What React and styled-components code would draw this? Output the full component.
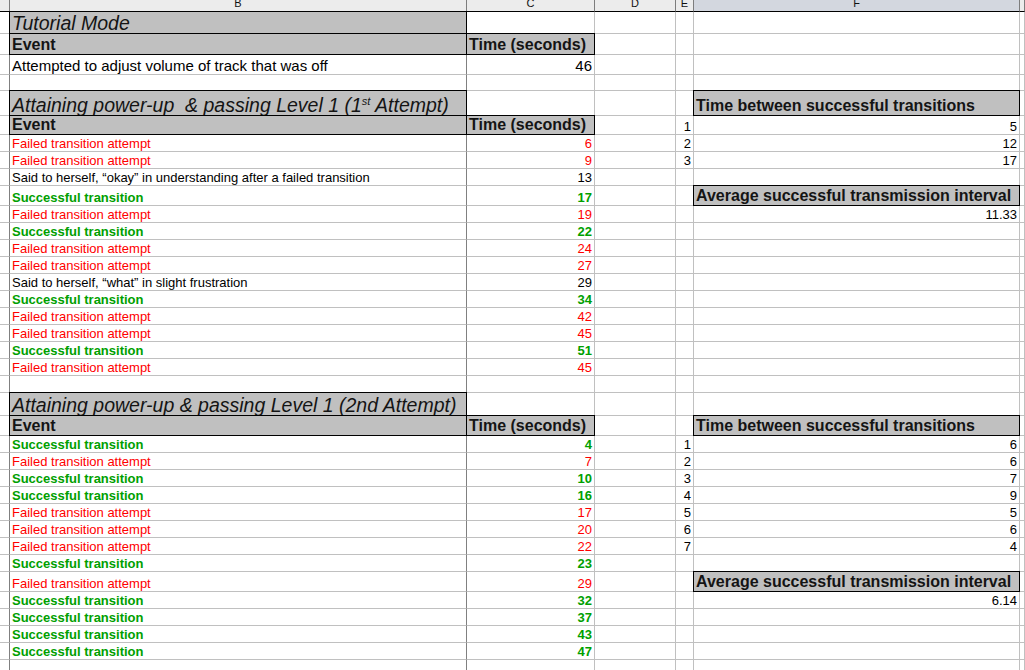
import React from 'react';
import styled, { createGlobalStyle, css } from 'styled-components';

const Global = createGlobalStyle`
  html, body { margin: 0; padding: 0; background: #fff; overflow: hidden; }
  body { font-family: "Liberation Sans", Arial, Helvetica, sans-serif; color: #000; }
  * { box-sizing: border-box; }
`;

const COLS = '10px 457px 128px 81px 18px 326px 1fr';

const Sheet = styled.div`
  width: 1025px;
  height: 670px;
  overflow: hidden;
  display: flex;
  flex-direction: column;
  background: #fff;
`;

const HeaderRow = styled.div`
  display: grid;
  grid-template-columns: ${COLS};
  height: 12px;
  flex: none;
`;

const ColHead = styled.div`
  height: 12px;
  overflow: hidden;
  display: flex;
  justify-content: center;
  align-items: flex-start;
  background: ${p => (p.$selected ? '#d3d7df' : '#ececec')};
  border-right: 1px solid #7d7d7d;
  border-bottom: 1px solid #000;
  font-size: 11px;
  color: #111;
`;

const ColLabel = styled.span`
  display: block;
  line-height: 11px;
  margin-top: -2px;
`;

const Row = styled.div`
  display: grid;
  grid-template-columns: ${COLS};
  height: ${p => p.$h}px;
  flex: none;
`;

const kinds = {
  title: css`font-size: 19.5px; font-style: italic; line-height: 20px;`,
  head: css`font-size: 16px; font-weight: bold; line-height: 18px;`,
  big: css`font-size: 15px; line-height: 17px;`,
  small: css`font-size: 13px; line-height: 15px;`,
};

const tones = {
  red: css`color: #ff0000;`,
  green: css`color: #00a000; font-weight: bold;`,
  black: css`color: #000;`,
};

const Cell = styled.div`
  display: flex;
  align-items: flex-end;
  justify-content: ${p => (p.$right ? 'flex-end' : 'flex-start')};
  padding: 0 2px;
  overflow: hidden;
  white-space: nowrap;
  border-right: 1px solid ${p => (p.$dark ? '#808080' : '#c0c0c0')};
  border-bottom: 1px solid #c0c0c0;
  ${p => kinds[p.$kind || 'small']}
  ${p => tones[p.$tone || 'black']}
  ${p =>
    p.$box &&
    css`
      background: #c0c0c0;
      color: #141414;
      border-right-color: #000;
      border-bottom-color: #000;
      box-shadow: -1px -1px 0 #000, 0 -1px 0 #000, -1px 0 0 #000;
    `}
`;

const Sup = styled.sup`
  font-size: 11px;
  line-height: 0;
  vertical-align: 7px;
`;

const FAIL = 'Failed transition attempt';
const OK = 'Successful transition';

const toneOf = type => (type === 'fail' ? 'red' : type === 'ok' ? 'green' : 'black');
const textOf = (type, note) => (type === 'fail' ? FAIL : type === 'ok' ? OK : note);

const ev = (type, time, extra = {}, note, h = 17) => ({
  h,
  b: { t: textOf(type, note), tone: toneOf(type) },
  c: { t: String(time), tone: toneOf(type), right: true },
  ...extra,
});

const num = (e, f) => ({
  e: e != null ? { t: String(e), right: true } : undefined,
  f: { t: String(f), right: true },
});

const headF = t => ({ f: { box: true, kind: 'head', t } });

const rows = [
  { h: 22, b: { box: true, kind: 'title', t: 'Tutorial Mode' } },
  { h: 21, b: { box: true, kind: 'head', t: 'Event' }, c: { box: true, kind: 'head', t: 'Time (seconds)' } },
  {
    h: 20,
    b: { kind: 'big', t: 'Attempted to adjust volume of track that was off' },
    c: { kind: 'big', t: '46', right: true },
  },
  { h: 16 },
  {
    h: 25,
    b: {
      box: true,
      kind: 'title',
      t: (
        <>
          Attaining power-up{'\u00a0'} &amp; passing Level 1 (1<Sup>st</Sup> Attempt)
        </>
      ),
    },
    ...headF('Time between successful transitions'),
  },
  {
    h: 19,
    b: { box: true, kind: 'head', t: 'Event' },
    c: { box: true, kind: 'head', t: 'Time (seconds)' },
    ...num(1, 5),
  },
  ev('fail', 6, num(2, 12)),
  ev('fail', 9, num(3, 17)),
  ev('note', 13, {}, 'Said to herself, \u201cokay\u201d in understanding after a failed transition'),
  ev('ok', 17, headF('Average successful transmission interval'), null, 20),
  ev('fail', 19, num(null, '11.33')),
  ev('ok', 22),
  ev('fail', 24),
  ev('fail', 27),
  ev('note', 29, {}, 'Said to herself, \u201cwhat\u201d in slight frustration'),
  ev('ok', 34),
  ev('fail', 42),
  ev('fail', 45),
  ev('ok', 51),
  ev('fail', 45),
  { h: 17 },
  { h: 23, b: { box: true, kind: 'title', t: 'Attaining power-up & passing Level 1 (2nd Attempt)' } },
  {
    h: 20,
    b: { box: true, kind: 'head', t: 'Event' },
    c: { box: true, kind: 'head', t: 'Time (seconds)' },
    ...headF('Time between successful transitions'),
  },
  ev('ok', 4, num(1, 6)),
  ev('fail', 7, num(2, 6)),
  ev('ok', 10, num(3, 7)),
  ev('ok', 16, num(4, 9)),
  ev('fail', 17, num(5, 5)),
  ev('fail', 20, num(6, 6)),
  ev('fail', 22, num(7, 4)),
  ev('ok', 23),
  ev('fail', 29, headF('Average successful transmission interval'), null, 20),
  ev('ok', 32, num(null, '6.14')),
  ev('ok', 37),
  ev('ok', 43),
  ev('ok', 47),
  { h: 17 },
];

const SheetCell = ({ data, dark }) =>
  data ? (
    <Cell $dark={dark} $box={data.box} $kind={data.kind} $tone={data.tone} $right={data.right}>
      <span>{data.t}</span>
    </Cell>
  ) : (
    <Cell $dark={dark} />
  );

const headers = [
  { l: '' },
  { l: 'B' },
  { l: 'C' },
  { l: 'D' },
  { l: 'E' },
  { l: 'F', sel: true },
  { l: '' },
];

export default function App() {
  return (
    <>
      <Global />
      <Sheet>
        <HeaderRow>
          {headers.map((h, i) => (
            <ColHead key={i} $selected={h.sel}>
              <ColLabel>{h.l}</ColLabel>
            </ColHead>
          ))}
        </HeaderRow>
        {rows.map((r, i) => (
          <Row key={i} $h={r.h}>
            <SheetCell dark />
            <SheetCell dark data={r.b} />
            <SheetCell data={r.c} />
            <SheetCell />
            <SheetCell data={r.e} />
            <SheetCell data={r.f} />
            <SheetCell />
          </Row>
        ))}
      </Sheet>
    </>
  );
}
